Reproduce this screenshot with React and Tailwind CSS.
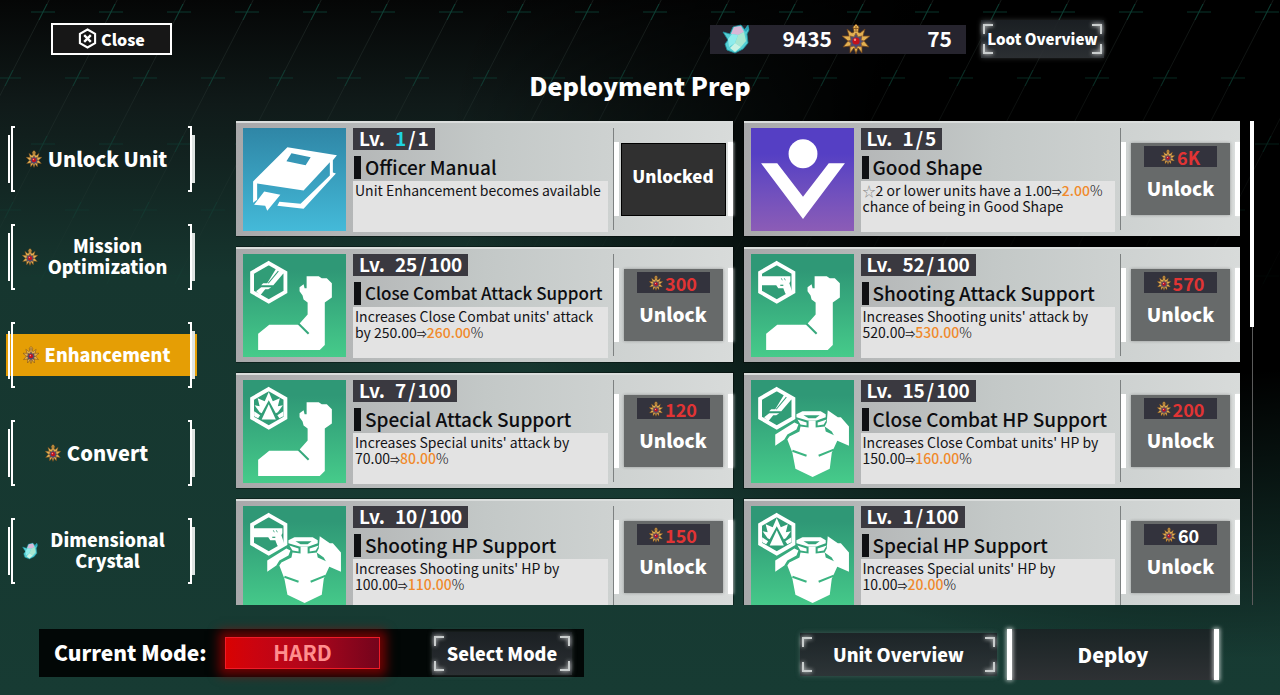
import { useState } from "react";
import clsx from "clsx";

const TABS = [
  { id: "unit", label: "Unlock Unit", icon: "medal" },
  { id: "mission", label: "Mission Optimization", icon: "medal", compact: true },
  { id: "enhancement", label: "Enhancement", icon: "medal", compact: true },
  { id: "convert", label: "Convert", icon: "medal" },
  { id: "crystal", label: "Dimensional Crystal", icon: "crystal", compact: true },
];

// {} marks the place of the current => next value
const UPGRADES = [
  { name: "Officer Manual", level: 1, max: 1, art: "book", lines: ["Unit Enhancement becomes available"] },
  { name: "Good Shape", level: 1, max: 5, art: "shape", star: true, lines: ["2 or lower units have a {}", "chance of being in Good Shape"], from: "1.00", to: "2.00", cost: "6K" },
  { name: "Close Combat Attack Support", level: 25, max: 100, art: "arm", badge: "sword", lines: ["Increases Close Combat units' attack", "by {}"], from: "250.00", to: "260.00", cost: "300" },
  { name: "Shooting Attack Support", level: 52, max: 100, art: "arm", badge: "gun", lines: ["Increases Shooting units' attack by", "{}"], from: "520.00", to: "530.00", cost: "570" },
  { name: "Special Attack Support", level: 7, max: 100, art: "arm", badge: "burst", lines: ["Increases Special units' attack by", "{}"], from: "70.00", to: "80.00", cost: "120" },
  { name: "Close Combat HP Support", level: 15, max: 100, art: "armor", badge: "sword", lines: ["Increases Close Combat units' HP by", "{}"], from: "150.00", to: "160.00", cost: "200" },
  { name: "Shooting HP Support", level: 10, max: 100, art: "armor", badge: "gun", lines: ["Increases Shooting units' HP by", "{}"], from: "100.00", to: "110.00", cost: "150" },
  { name: "Special HP Support", level: 1, max: 100, art: "armor", badge: "burst", lines: ["Increases Special units' HP by", "{}"], from: "10.00", to: "20.00", cost: "60", affordable: true },
];

function MedalIcon({ className }) {
  return (
    <svg viewBox="0 0 28 30" className={className} aria-hidden="true">
      <path d="M14 0l3 3-1 5 2 1 5-4-2 7 7 0-6 5 5 6-7-1 0 7-4-5-2 6-2-6-4 5 0-7-7 1 5-6-6-5 7 0-2-7 5 4 2-1-1-5z" fill="#e3b052" stroke="#6f4219" strokeWidth="0.8" />
      <path d="M14 9l2 4 4-1-1 4 3 1-3 2 1 4-4-1-2 3-2-3-4 1 1-4-3-2 3-1-1-4 4 1z" fill="#4d4a72" stroke="#8a5a2e" strokeWidth="0.8" />
      <circle cx="14" cy="17" r="3.600" fill="#c3121c" />
      <circle cx="13" cy="15.800" r="1.200" fill="#ff8a80" />
      <path d="M14 2v6M11.500 4.500h5" stroke="#7a4a1c" strokeWidth="0.800" />
    </svg>
  );
}

function CrystalIcon({ className }) {
  return (
    <svg viewBox="0 0 28 30" className={className} aria-hidden="true">
      <path d="M1 8l7 2 3-7 8-2 4 5 3-5 1 5-2 4 1 9-5 6-8 4-8-3-2-6 3-4z" fill="#54cfd4" stroke="#1c8f9c" strokeWidth="0.8" />
      <path d="M9 10l3-7 7-1 3 6-6 3z" fill="#d9b7d6" />
      <path d="M6 15l4-5 6 1-3 8-6 4z" fill="#8fecec" />
      <path d="M16 11l6-3 2 9-5 6-6-4z" fill="#a8e6d0" />
      <path d="M13 19l6 4-6 5-5-4z" fill="#c9f2e4" />
      <path d="M22 6l3-4 2 2-3 4z" fill="#2aa6ba" />
    </svg>
  );
}

function CurrencyIcon({ kind, className }) {
  return kind === "crystal" ? <CrystalIcon className={className} /> : <MedalIcon className={className} />;
}

// small hexagonal emblem in the corner of the artwork
function Emblem({ kind }) {
  return (
    <g>
      <path d="M25.500 9L42 18.500v19L25.500 47 9 37.500v-19z" fill="#319d77" stroke="#fff" strokeWidth="3.800" />
      {kind === "sword" && (
        <g fill="#fff">
          <path d="M33 14l8 4-11 13H18l2-2h4z" />
          <path d="M35 17l-10 12" stroke="#319d77" strokeWidth="1" />
          <path d="M18 33h10l-3 2h-3l-5 6-4-4z" />
        </g>
      )}
      {kind === "gun" && (
        <g fill="#fff">
          <path d="M10 22h29v5l-1 2 3 9-4 3-3-2-2-5h-5l-2-3H10z" />
          <path d="M30 24l1 2M33 24l1 2" stroke="#319d77" strokeWidth="0.800" />
          <path d="M29 31h3" stroke="#319d77" strokeWidth="1.200" />
        </g>
      )}
      {kind === "burst" && (
        <g fill="#fff">
          <path d="M25.500 12l4 9 7-3-2 8 5-1-5 7-2 1-7-13-7 13-2-1-5-7 5 1-2-8 7 3z" />
          <path d="M25.500 24l7 15h-14z" />
          <path d="M11 31l6 4-2 3-4-2zM40 31l-6 4 2 3 4-2z" />
        </g>
      )}
    </g>
  );
}

function Artwork({ art, badge }) {
  return (
    <svg viewBox="0 0 102 102" className="size-full" fill="#fff" aria-hidden="true">
      {art === "book" && (
        <g>
          <path fillRule="evenodd" d="M44 19l49 8-4 5v12l3 1-32 35-26-3 2-4 21 2 29-28V34L60 62 14 55v16l-4 3V53zM48 25l-5 8 19 4 5-8z" />
          <path d="M21 63l16 3-13 16-2-5-11-1z" />
        </g>
      )}
      {art === "shape" && (
        <g>
          <circle cx="51.500" cy="25.500" r="14.300" />
          <path d="M10 35h16l25.500 33L77 35h16L51.500 90z" />
        </g>
      )}
      {art === "arm" && (
        <g>
          <path d="M63 22h12l3 2h5l5 5v14l-7 5v42l-5 5H15V79l11-9h29l9-10V48l-4-3-1-4-3-4v-4l4-3 1 4h2z" />
          <path d="M55 69l10 10" stroke="#36a87c" strokeWidth="2" />
        </g>
      )}
      {art === "armor" && (
        <g>
          {/* shoulder plates */}
          <path d="M76 30l10 7h3l8 9v19l-12-5-5-9-7-5 2-4z" />
          <path d="M43 42l4 2-2 5-9 5-3 5-9 6V54z" />
          {/* collar */}
          <path fillRule="evenodd" d="M45 34l6-3h18l5 3v3l-9 3h-9l-11-3zM52 35l5 3h7l4-3z" />
          {/* chest */}
          <path d="M57 40h7v7l9-1 1 5 11 5 1 3-6 13-2 16-17 8-17-8-3-16-5-13 2-3 10-5 1-5 8 1z" />
          <path d="M46 39l9 3v3l-6-1zM75 39l-9 3v3l6-1z" />
          <path d="M41 70l14 5M82 69l-15 6" stroke="#3bb481" strokeWidth="2" />
        </g>
      )}
      {badge && <Emblem kind={badge} />}
    </svg>
  );
}

function FrameButton({ className, children }) {
  return (
    <button
      type="button"
      className={clsx(
        "relative flex items-center justify-center bg-linear-to-b from-[#1d2226]/90 to-[#303438]/90 font-black whitespace-nowrap text-white shadow-[0_0_5px_rgba(160,170,170,0.3)]",
        className
      )}
    >
      <span className="absolute top-1 left-0.5 size-2.5 border-t-2 border-l-2 border-[#c9cdcd] drop-shadow-[0_0_2px_#fff]" />
      <span className="absolute top-1 right-0.5 size-2.5 border-t-2 border-r-2 border-[#c9cdcd] drop-shadow-[0_0_2px_#fff]" />
      <span className="absolute bottom-1 left-0.5 size-2.5 border-b-2 border-l-2 border-[#c9cdcd] drop-shadow-[0_0_2px_#fff]" />
      <span className="absolute right-0.5 bottom-1 size-2.5 border-r-2 border-b-2 border-[#c9cdcd] drop-shadow-[0_0_2px_#fff]" />
      {children}
    </button>
  );
}

function TabButton({ tab, active, onSelect }) {
  return (
    <button
      type="button"
      aria-current={active ? "page" : undefined}
      onClick={() => onSelect(tab.id)}
      className="relative flex h-[66px] w-full items-center"
    >
      {active && <span className="absolute -inset-x-0.5 inset-y-3 bg-[#e59e05]" />}
      <span className="relative flex h-full items-center gap-px">
        <span className="h-12 w-0.5 bg-white" />
        <span className="h-full w-1 border-y-2 border-l-2 border-white" />
      </span>
      <span className="relative flex flex-1 items-center justify-center gap-1.5 pr-2.5">
        <CurrencyIcon kind={tab.icon} className="h-[18px] w-4 shrink-0" />
        <span
          className={clsx(
            "max-w-[128px] pb-0.5 text-center font-black text-white",
            tab.compact ? "text-[18px]/[21px]" : "text-[20px]/[21px]"
          )}
        >
          {tab.label}
        </span>
      </span>
      <span className="relative flex h-full items-center">
        <span className="h-full w-1 border-y-2 border-r-2 border-white" />
        <span className="h-12 w-[3px] bg-[#dfe4e2]" />
      </span>
    </button>
  );
}

function UnlockPanel({ item }) {
  return (
    <div className="mt-[19px] flex w-[119px] shrink-0 items-center justify-between self-start">
      <span className="h-[74px] w-[5px] bg-white" />
      {item.cost ? (
        <button type="button" className="flex h-[72px] w-[99px] flex-col items-center bg-[#676a6a] pt-[3px] font-bold shadow-[0_0_3px_rgba(0,0,0,0.3)]">
          <span className="flex h-[21px] w-[73px] items-center justify-center gap-0.5 bg-[#33333d]">
            <MedalIcon className="h-4 w-[14px]" />
            <span className={clsx("text-[18px]/[20px]", item.affordable ? "text-white" : "text-[#e13434]")}>{item.cost}</span>
          </span>
          <span className="mt-2 text-[19px]/[26px] font-black text-white">Unlock</span>
        </button>
      ) : (
        <button type="button" disabled className="h-[73px] w-[105px] border border-black bg-[#303030] pb-1.5 text-[17px] font-black text-white">
          Unlocked
        </button>
      )}
      <span className="h-[74px] w-[5px] bg-white shadow-[1px_0_3px_rgba(255,255,255,0.6)]" />
    </div>
  );
}

function ValueChange({ from, to }) {
  return (
    <>
      {from}
      <span className="text-[10px]/[10px]">⇒</span>
      <span className="font-medium text-[#f08a2c]">{to}</span>
      <span className="font-light">%</span>
    </>
  );
}

const ART_BG = {
  book: "bg-linear-to-b from-[#2f86a6] to-[#44bad9]",
  shape: "bg-linear-to-b from-[#553fc4] from-25% to-[#8c5cb6]",
  arm: "bg-linear-to-b from-[#2f9876] from-15% to-[#46cb8a]",
  armor: "bg-linear-to-b from-[#2f9876] from-15% to-[#46cb8a]",
};

function UpgradeCard({ item }) {
  return (
    <article className="flex h-[115px] border-t-2 border-[#dadddc] bg-linear-to-r from-[#a8a8aa] via-[#c3c8c7] to-[#d8dbda] shadow-[0_0_0_1px_rgba(0,0,0,0.35)]">
      <div className={clsx("mt-[5px] ml-[7px] size-[103px] shrink-0", ART_BG[item.art])}>
        <Artwork art={item.art} badge={item.badge} />
      </div>
      <div className="mt-[5px] mb-1 ml-[7px] flex min-w-0 flex-1 flex-col items-start">
        <p className="flex h-[22px] items-center gap-2.5 bg-[#3a3940] px-1.5 pb-0.5 text-[19px]/[20px] font-bold text-white">
          <span>Lv.</span>
          <span className="flex gap-0.5">
            <span className={clsx(item.level === item.max && "text-[#20d3e0]")}>{item.level}</span>
            <span>/</span>
            <span>{item.max}</span>
          </span>
        </p>
        <h2
          className={clsx(
            "mt-1.5 flex h-[23px] items-center gap-1 pl-px font-medium whitespace-nowrap text-[#0d0d10]",
            item.name.length > 25 ? "text-[17px]/[20px]" : "text-[19px]/[20px]"
          )}
        >
          <span className="h-full w-[7px] bg-[#0f1013]" />
          <span className="pb-0.5">{item.name}</span>
        </h2>
        <div className="mt-0.5 w-full flex-1 bg-[#e3e3e3] pt-px pl-0.5 text-[14px]/[16px] whitespace-nowrap text-[#141417]">
          {item.lines.map((line, i) => {
            const [before, after] = line.split("{}");
            return (
              <p key={line} className="h-4">
                {item.star && i === 0 && <span className="text-[13px]/[13px] text-[#8b8b8b]">☆</span>}
                {before}
                {after !== undefined && <ValueChange from={item.from} to={item.to} />}
              </p>
            );
          })}
        </div>
      </div>
      <div className="mt-[5px] mb-1.5 ml-[5px] w-px bg-[#7d8181]" />
      <UnlockPanel item={item} />
    </article>
  );
}

function Backdrop() {
  return (
    <svg className="absolute inset-0 size-full opacity-60" aria-hidden="true">
      <defs>
        <pattern id="lattice" width="68" height="132" patternUnits="userSpaceOnUse" x="9" y="-54">
          <path d="M22 66h24M-12 132h24M56 132h24M-12 0h24M56 0h24" stroke="#0d5b49" strokeWidth="1" />
          <path d="M68 0L0 132" stroke="#4a5a55" strokeOpacity="0.450" strokeWidth="1" />
          <path d="M38 58l-8 16M4 124l-8 16M72 124l-8 16M4 -8l-8 16M72 -8l-8 16" stroke="#0d6b55" strokeWidth="1" />
        </pattern>
        <linearGradient id="fade" x1="0" y1="0" x2="0" y2="1">
          <stop offset="0" stopColor="#fff" />
          <stop offset="0.180" stopColor="#999" />
          <stop offset="0.450" stopColor="#000" />
        </linearGradient>
        <mask id="top-only">
          <rect width="100%" height="100%" fill="url(#fade)" />
        </mask>
      </defs>
      <rect width="100%" height="100%" fill="url(#lattice)" mask="url(#top-only)" />
    </svg>
  );
}

export default function App() {
  const [tab, setTab] = useState("enhancement");

  return (
    <div className="relative flex h-screen flex-col overflow-hidden bg-[radial-gradient(ellipse_60%_75%_at_95%_20%,#000_45%,transparent_100%),linear-gradient(to_bottom,#050606_0%,#101a19_15%,#16362f_40%,#173b33_100%)] font-['Noto_Sans_CJK_JP','Noto_Sans',sans-serif]">
      <Backdrop />

      <header className="relative flex items-center justify-between pt-5 pr-[176px] pl-[51px]">
        <button type="button" className="flex h-8 w-[121px] items-center justify-center gap-1 border-2 border-white bg-[#171717] pb-px text-[16px]/[24px] font-black text-white">
          <svg viewBox="0 0 20 22" className="h-[21px] w-[19px]" fill="none" stroke="#fff" aria-hidden="true">
            <path d="M10 1.500l8 4.500v10l-8 4.500L2 16V6z" strokeWidth="2.200" />
            <path d="M6.500 7.500l7 7M13.500 7.500l-7 7" strokeWidth="2.500" />
          </svg>
          Close
        </button>
        <div className="flex items-center gap-[15px]">
          <div className="flex h-[29px] w-64 items-center bg-[#26242e] pr-3.5 pl-3 text-[21px]/[26px] font-bold text-white">
            <CrystalIcon className="h-[30px] w-7" />
            <span className="flex-1 pb-0.5 text-right">9435</span>
            <MedalIcon className="ml-2.5 h-[30px] w-7" />
            <span className="w-[82px] pb-0.5 text-right">75</span>
          </div>
          <FrameButton className="h-[38px] w-[123px] text-[15px]">Loot Overview</FrameButton>
        </div>
      </header>

      <h1 className="relative mt-2 mb-[17px] text-center text-[25px]/[38px] font-black text-white">Deployment Prep</h1>

      <main className="relative flex min-h-0 flex-1 pr-[26px] pl-2">
        <nav className="mr-[41px] flex w-[187px] shrink-0 flex-col gap-8 pt-[5px]">
          {TABS.map((t) => (
            <TabButton key={t.id} tab={t} active={t.id === tab} onSelect={setTab} />
          ))}
        </nav>
        <section className="grid min-w-0 flex-1 grid-cols-2 content-start gap-[11px] overflow-hidden">
          {UPGRADES.map((item) => (
            <UpgradeCard key={item.name} item={item} />
          ))}
        </section>
        <div className="ml-2.5 flex w-1 flex-col items-center">
          <span className="h-[206px] w-full bg-white" />
          <span className="w-px flex-1 bg-[#5b5b5b]" />
        </div>
      </main>

      <footer className="relative flex items-start justify-between pt-6 pr-[61px] pb-[15px] pl-[39px]">
        <div className="flex h-12 w-[545px] items-center bg-[#020706] pr-3 pl-[15px]">
          <span className="w-[171px] text-[21px] font-black text-white">Current Mode:</span>
          <span className="flex h-8 w-[155px] items-center justify-center border border-[#f01c28] bg-linear-to-r from-[#d90202] via-[#b3061a] to-[#74041c] text-[21px] font-bold text-[#ff8e8e] shadow-[0_0_10px_6px_rgba(170,0,0,0.65)]">
            HARD
          </span>
          <FrameButton className="ml-auto h-[43px] w-[140px] text-[18px]">Select Mode</FrameButton>
        </div>
        <div className="flex items-center gap-2.5">
          <FrameButton className="h-[43px] w-[197px] text-[18px]">Unit Overview</FrameButton>
          <button type="button" className="flex h-[51px] w-[212px] items-center bg-linear-to-b from-[#1a2425] to-[#2e3134] text-[20px] font-black text-white">
            <span className="h-full w-[5px] bg-white shadow-[0_0_4px_1px_rgba(255,255,255,0.7)]" />
            <span className="flex-1">Deploy</span>
            <span className="h-full w-[5px] bg-white shadow-[0_0_4px_1px_rgba(255,255,255,0.7)]" />
          </button>
        </div>
      </footer>
    </div>
  );
}
